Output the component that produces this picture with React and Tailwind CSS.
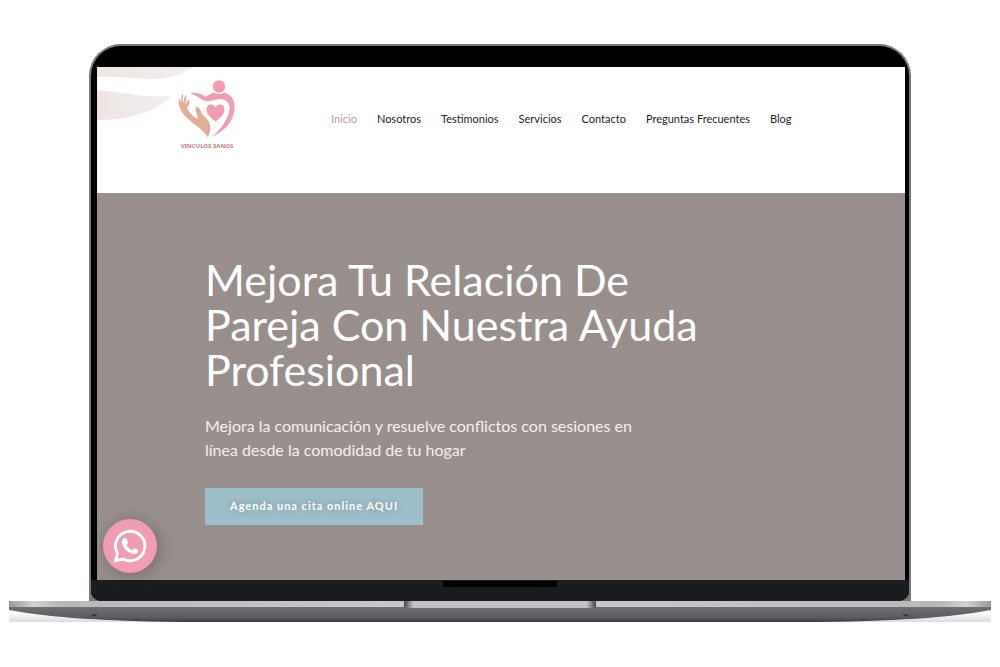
import React from "react";

const links = [
  "Inicio",
  "Nosotros",
  "Testimonios",
  "Servicios",
  "Contacto",
  "Preguntas Frecuentes",
  "Blog",
];

function Waves() {
  return (
    <svg viewBox="0 0 96 54" className="absolute top-0 left-0 h-[54px] w-24" aria-hidden="true">
      <defs>
        <linearGradient id="wave" x1="0" y1="0" x2="1" y2="0">
          <stop offset="0" stopColor="#ece5e4" />
          <stop offset="1" stopColor="#f2eeed" />
        </linearGradient>
      </defs>
      <path d="M0 0H96C84 8 72 12 56 12C36 12 20 9 0 10Z" fill="url(#wave)" />
      <path d="M0 23C24 25 44 31 74 29C60 45 30 53 0 53Z" fill="url(#wave)" />
    </svg>
  );
}

function Logo() {
  return (
    <a href="#inicio" className="relative flex w-16 flex-col items-center" aria-label="Vinculos Sanos">
      <svg viewBox="0 0 60 60" className="h-[60px] w-[60px]" aria-hidden="true">
        <g fill="#f09cb3">
          <circle cx="42" cy="6.500" r="6.200" />
          <path d="M13 13C19 12 25 14 29 17C31 15 34 13.500 37 12.500C39 14.500 45 14.500 47 12.500C54 14 58 20 57.500 28C57 41 49 50 35 57C45 48 52.500 37 52.500 28C52.500 22 48 19 43 19C38 19 34 22 28 21C23 19 19 15 13 13Z" />
          <path d="M38.500 41.500C33 37 29.500 34 29.500 29.500C29.500 24 36 22.500 38.500 27.500C41 22.500 47.500 24 47.500 29.500C47.500 34 44 37 38.500 41.500Z" />
        </g>
        <path
          d="M2 18C1 24 3 30 7 35C14 43 25 48 31 57.500C35 48 34 42 27 36C23 33 24 27 19.500 27C17 29 20.500 34 21 39C16 37 12 32 10 28C11 27 13.500 23 12 19.500C10.500 20 10 22 8.500 24C8 22 10.500 18 9 15C7 16 7.500 20 6 23C5 21 7 16 5.500 14C3.500 15 5 20 4 22C3 20 3 19 2 18Z"
          fill="#e2ad96"
        />
      </svg>
      <span className="mt-0.5 font-['Noto_Sans',sans-serif] text-[6px] leading-[8px] font-bold whitespace-nowrap text-[#c07f7b]">
        VINCULOS SANOS
      </span>
    </a>
  );
}

function Header() {
  return (
    <header className="relative flex h-[126px] items-start bg-white pt-[13px] pl-[78px]">
      <Waves />
      <Logo />
      <nav className="mt-[29px] ml-[92px]" aria-label="Principal">
        <ul className="flex gap-5 font-[Lato,sans-serif] text-[11px] leading-5 whitespace-nowrap text-[#242424]">
          {links.map((label, i) => (
            <li key={label}>
              <a href="#inicio" className={i === 0 ? "text-[#b39c9b]" : "text-[#242424]"}>
                {label}
              </a>
            </li>
          ))}
        </ul>
      </nav>
    </header>
  );
}

function Hero() {
  return (
    <section className="bg-[#988f8d] pt-16 pr-10 pb-[55px] pl-[108px] text-white">
      <h1 className="max-w-[530px] font-[Lato,sans-serif] text-[43px] leading-[45px]">
        Mejora Tu Relación De Pareja Con Nuestra Ayuda Profesional
      </h1>
      <p className="mt-[22px] max-w-[450px] font-[Lato,sans-serif] text-[16px] leading-6 text-[#f3f0ef]">
        Mejora la comunicación y resuelve conflictos con sesiones en línea desde la comodidad de tu hogar
      </p>
      <button
        type="button"
        className="mt-[26px] block h-[37px] bg-[#9dbfca] px-[25px] font-[Lato,sans-serif] text-[11px] font-bold tracking-[1px] text-white text-shadow-[0_0_6px_#0000004d]"
      >
        Agenda una cita online AQUI
      </button>
    </section>
  );
}

function ChatIcon() {
  return (
    <svg viewBox="0 0 34 34" className="size-[34px]" aria-hidden="true">
      <path
        d="M2.500 31.800L4.500 24.500A14.700 14.700 0 1 1 10.200 30Z"
        fill="none"
        stroke="currentColor"
        strokeWidth="3"
        strokeLinejoin="miter"
      />
      <path
        d="M10.500 9.500C11.500 8.800 13 8.900 13.500 9.800L15 13.200C15.300 14.300 13.700 15.300 13.600 16C14.800 18.400 16.600 20 19 21C19.900 20.900 20.700 19 21.700 19.200L24.800 20.700C25.600 21.300 25.200 22.800 24.300 23.700C22.400 25.400 19.600 25.200 16.800 23.800C13.500 22.200 11 19.400 9.500 16.300C8.300 13.700 8.500 11 10.500 9.500Z"
        fill="currentColor"
      />
    </svg>
  );
}

function LaptopBase() {
  return (
    <svg viewBox="0 0 982 22" className="block w-full" aria-hidden="true">
      <defs>
        <linearGradient id="under" x1="0" y1="0" x2="0" y2="1">
          <stop offset="0" stopColor="#727276" />
          <stop offset="0.700" stopColor="#5c5c61" />
          <stop offset="1" stopColor="#3c3c41" />
        </linearGradient>
        <linearGradient id="rim" x1="0" y1="0" x2="1" y2="0">
          <stop offset="0" stopColor="#98989b" />
          <stop offset="0.025" stopColor="#d2d2d4" />
          <stop offset="0.050" stopColor="#b9b9bc" />
          <stop offset="0.500" stopColor="#cdcdd0" />
          <stop offset="0.950" stopColor="#b9b9bc" />
          <stop offset="0.975" stopColor="#d2d2d4" />
          <stop offset="1" stopColor="#98989b" />
        </linearGradient>
        <linearGradient id="notch" x1="0" y1="0" x2="1" y2="0">
          <stop offset="0" stopColor="#49494d" />
          <stop offset="0.050" stopColor="#c2c2c6" />
          <stop offset="0.950" stopColor="#c2c2c6" />
          <stop offset="1" stopColor="#49494d" />
        </linearGradient>
        <linearGradient id="shade" x1="0" y1="0" x2="0" y2="1">
          <stop offset="0" stopColor="#ffffff" />
          <stop offset="1" stopColor="#dcdcde" />
        </linearGradient>
      </defs>
      <path d="M0 11H982V21H0Z" fill="url(#shade)" />
      <path d="M0 5H982V9C950 15 900 20 810 21H172C82 20 32 15 0 9Z" fill="url(#under)" />
      <rect width="982" height="6" fill="url(#rim)" />
      <rect x="395" width="192" height="7" rx="1" fill="url(#notch)" />
      <ellipse cx="85" cy="14" rx="3" ry="1" fill="#37373b" />
      <ellipse cx="897" cy="14" rx="3" ry="1" fill="#37373b" />
    </svg>
  );
}

export default function App() {
  return (
    <main className="min-h-screen bg-white px-[9px] pt-11">
      <div className="mx-20 rounded-t-[32px] bg-[#77797c] px-[2px] pt-[2px]">
        <div className="rounded-t-[30px] rounded-b-[10px] bg-black pt-[21px]">
          <div className="relative mr-1 ml-[6px]">
            <Header />
            <Hero />
            <a
              href="#whatsapp"
              aria-label="WhatsApp"
              className="absolute bottom-[7px] left-[6px] flex size-[54px] items-center justify-center rounded-full bg-[#f09cb2] text-white shadow-[2px_2px_14px_#00000040]"
            >
              <ChatIcon />
            </a>
          </div>
          <div className="flex h-[21px] justify-center rounded-b-[10px] bg-[#1b1c20] pt-px">
            <div className="h-[6px] w-[114px] bg-black" />
          </div>
        </div>
      </div>
      <LaptopBase />
    </main>
  );
}
